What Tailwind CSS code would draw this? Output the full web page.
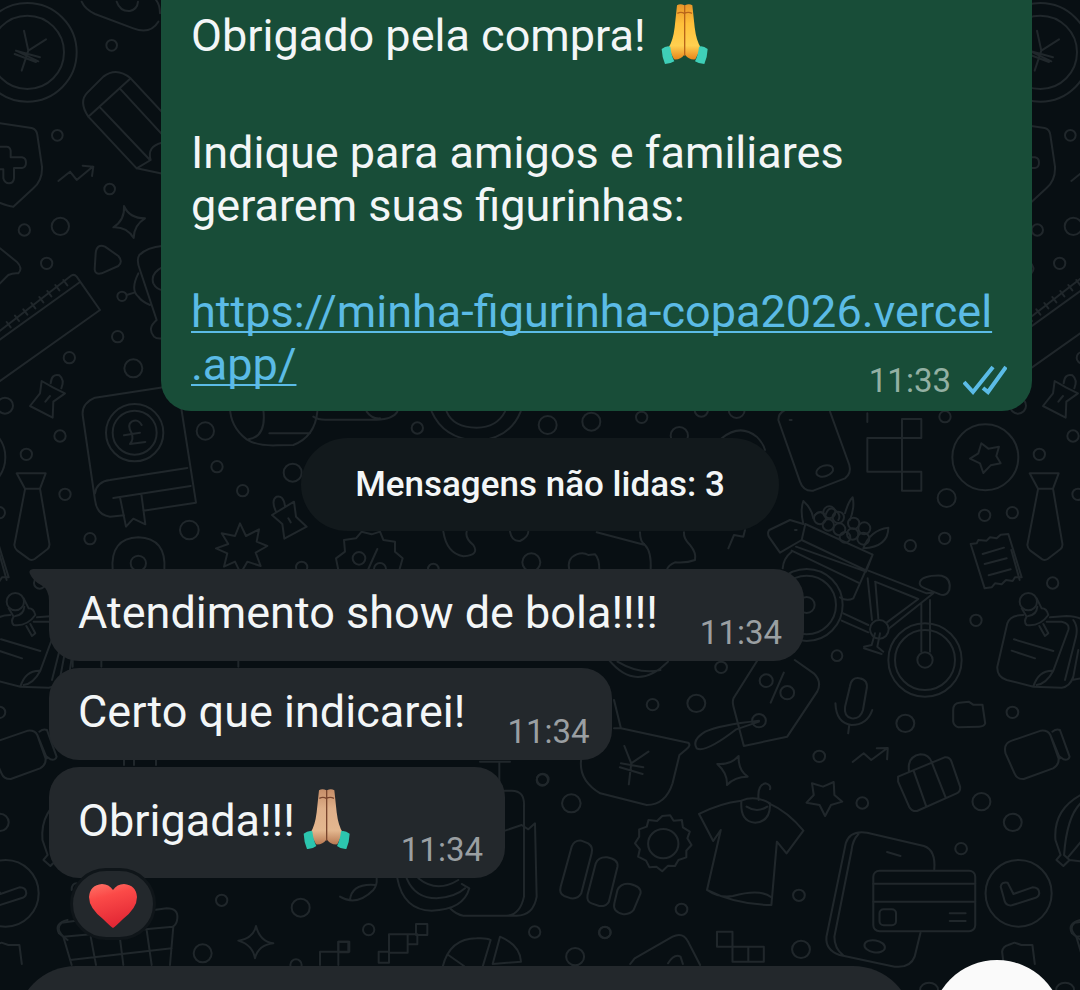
<!DOCTYPE html>
<html lang="pt-BR">

<head>
    <meta charset="UTF-8">
    <meta name="viewport" content="width=device-width, initial-scale=1.0">
    <title>Conversa</title>
    <script src="https://cdn.jsdelivr.net/npm/@tailwindcss/browser@4"></script>
</head>

<body class="bg-[#080f13] font-[Roboto,sans-serif] text-[#f3f6f7]">

    <div class="relative isolate flex min-h-screen flex-col overflow-hidden">

        <!-- doodle wallpaper, repeats every 1013px -->
        <svg class="absolute inset-0 -z-10 h-full w-full" viewBox="0 0 1080 990" preserveAspectRatio="xMinYMin slice"
            fill="none" stroke="#20272b" stroke-linecap="round" stroke-linejoin="round" aria-hidden="true">
            <g id="tile" transform="scale(.33333)" stroke-width="6">
                <!-- top left -->
                <path d="M245 5Q255 28 285 42L400 85Q450 105 475 65M350 5Q360 35 390 33Q412 28 414 5M468 0Q480 15 480 40" />
                <circle cx="82" cy="157" r="148" />
                <circle cx="82" cy="157" r="110" />
                <path d="M72 92L85 152L138 118M85 152L65 212M48 152L115 184M44 162L108 186M48 152L120 172" />
                <circle cx="335" cy="136" r="16" />
                <path d="M265 350Q235 305 262 278L310 230Q350 200 392 235L265 350L410 505L520 528M392 235L620 480M362 268L520 440M300 322L450 480M410 505L452 480Q440 440 485 428" />
                <circle cx="172" cy="406" r="16" />
                <path d="M0 370L95 384Q110 388 112 405L126 500Q128 540 100 565L40 620Q20 618 -20 600" />
                <path d="M-5 440H20Q30 440 32 452V472H66Q78 474 78 488Q78 502 66 504H42V535Q40 550 27 550Q14 550 10 535V508H-5" />
                <path d="M175 543L210 515L230 540L278 500M248 497L280 500L276 528" />
                <circle cx="329" cy="567" r="16" />
                <circle cx="73" cy="690" r="17" />
                <circle cx="181" cy="679" r="26" />
                <circle cx="140" cy="790" r="17" />
                <path d="M372 618Q388 655 435 655Q402 675 401 714Q380 680 340 682Q375 660 372 618Z" />
                <path d="M287 760Q290 730 315 740L355 768Q370 785 355 798L305 820Q285 825 284 808Z" />
                <path d="M0 745L50 785Q70 805 55 820Q40 818 25 825L-10 860" />
                <path d="M-10 1000L215 826Q223 822 230 830L300 930L-10 1150M-10 1026L240 846M20 966l12 16M45 947l12 16M70 928l12 16M94 909l12 16M118 891l12 16M142 873l12 16M166 855l12 16M190 840l12 16" />
                <path d="M490 737Q440 742 418 765Q408 780 420 810L470 960Q440 985 462 1010Q470 1018 490 1015M415 820Q390 870 415 890Q425 905 450 915M380 885L405 877M490 800Q450 820 460 850Q470 870 490 870" />
                <circle cx="366" cy="889" r="14" />
                <circle cx="353" cy="1010" r="17" />
                <circle cx="208" cy="1073" r="17" />
                <circle cx="400" cy="1105" r="27" />
                <circle cx="15" cy="1217" r="24" />
                <path d="M125 1143L120 1180L90 1218L158 1253L160 1205L195 1180L160 1163Z M152 1150Q155 1120 178 1126Q195 1140 184 1165M136 1205L150 1188" />

                <!-- under the first bubble -->
                <g transform="translate(0 1200)">
                    <path d="M330 350Q290 345 285 300L248 45Q245 10 285 -7L500 -40Q535 -40 540 0L588 308L430 332M285 280Q290 245 330 240L562 204M340 294L572 258M360 292L378 380L400 356L436 373L424 282M330 350L372 346" />
                    <circle cx="404" cy="98" r="86" />
                    <circle cx="404" cy="98" r="66" />
                    <path d="M425 75Q415 55 395 65Q380 75 395 100Q402 118 390 132L436 126M372 106L420 98" />
                    <circle cx="180" cy="108" r="17" />
                    <circle cx="79" cy="163" r="17" />
                    <circle cx="195" cy="283" r="17" />
                    <circle cx="270" cy="416" r="17" />
                    <circle cx="616" cy="93" r="26" />
                    <circle cx="651" cy="200" r="17" />
                    <circle cx="728" cy="272" r="17" />
                    <circle cx="878" cy="218" r="27" />
                    <circle cx="568" cy="390" r="28" />
                    <circle cx="905" cy="502" r="17" />
                    <path d="M50 220H137L120 266H75ZM75 268L43 435Q44 445 52 452L88 478Q96 482 104 477L142 448Q150 440 148 430L120 266" />
                    <path d="M338 510Q330 415 415 412Q500 415 493 510" />
                    <circle cx="415" cy="490" r="23" />
                    <path d="M720 370L738 408L777 388L770 425L802 438L767 458L782 498L742 485L722 520L705 485L672 500L682 460L648 445L685 432L665 400L705 408Z" />
                    <path d="M882 305L816 345L847 372L853 416L920 380L888 350ZM828 335Q812 300 830 290Q850 285 855 318M865 355L872 367" />
                    <path d="M690 20Q690 80 740 118Q770 138 830 136L880 135Q945 110 952 35M790 30Q800 110 745 118M808 100H930" />
                    <path d="M-5 450L20 540" />
                </g>

                <!-- around the unread pill -->
                <g transform="translate(900 1185)">
                    <path d="M40 65Q55 75 80 74H230Q280 72 292 50M200 50Q215 72 240 70M395 50Q430 130 530 138Q630 130 662 50M440 50Q460 98 530 98Q590 98 615 50" />
                    <circle cx="352" cy="99" r="17" />
                    <circle cx="743" cy="90" r="27" />
                    <circle cx="874" cy="80" r="27" />
                    <circle cx="1025" cy="67" r="17" />
                    <circle cx="1138" cy="122" r="26" />
                    <circle cx="1204" cy="45" r="20" />
                    <circle cx="1310" cy="45" r="24" />
                    <path d="M1265 130Q1320 85 1370 125Q1390 145 1395 165" />
                    <path d="M115 525L108 490L135 470L132 435L168 430L185 410L215 418L240 410L250 435L285 440L285 470L308 490L298 525M205 522L232 462" />
                    <circle cx="177" cy="490" r="19" />
                    <circle cx="240" cy="522" r="18" />
                    <path d="M430 410Q440 475 490 484Q540 480 520 450Q495 430 500 410M630 410Q635 440 660 438Q685 425 685 410" />
                    <circle cx="400" cy="522" r="16" />
                    <circle cx="694" cy="502" r="27" />
                    <path d="M808 525Q800 490 830 478Q850 470 865 480L885 478Q898 490 898 525M890 412L1035 450Q1055 470 1052 525M1020 412Q1020 440 1035 450M1152 412Q1150 430 1170 450Q1190 475 1185 495Q1160 505 1125 502Q1105 510 1100 525M1285 460L1302 420L1330 425L1335 405" />
                </g>

                <!-- right: phone, boxes, bicycle -->
                <g transform="translate(2280 1200)">
                    <path d="M55 60Q55 40 75 30M55 60L120 245Q130 275 160 272L255 235Q275 220 268 195L210 35M95 60h-6" />
                    <ellipse cx="194" cy="213" rx="26" ry="16" transform="rotate(-18 194 213)" />
                    <path d="M322 114H484V57H426V272H484V215H322ZM322 66V40" />
                    <circle cx="676" cy="172" r="99" />
                    <path d="M664 130L685 146L717 140L709 168L722 190L692 196L670 219L660 190L630 176L655 160Z" />
                    <circle cx="555" cy="50" r="17" />
                    <circle cx="560" cy="294" r="27" />
                    <circle cx="674" cy="346" r="17" />
                    <circle cx="757" cy="338" r="17" />
                    <circle cx="451" cy="437" r="17" />
                    <circle cx="554" cy="415" r="17" />
                    <circle cx="878" cy="549" r="17" />
                    <circle cx="648" cy="661" r="17" />
                    <circle cx="231" cy="767" r="16" />
                    <path d="M632 432L650 430L655 420L680 422L690 412L710 415L722 404L745 402L785 532L765 532L758 543L738 540L725 553L705 550L695 562L674 565ZM668 462L732 443M674 492L740 475M686 526L752 508" />
                    <path d="M130 372L90 360L28 390Q20 400 28 412L60 458L125 420L136 372L338 464L318 515L108 440M338 464L280 595Q260 605 240 592M95 452L295 548M125 420L320 512M95 455Q70 475 68 505M110 390h-5" />
                    <path d="M130 372Q120 330 130 303Q155 325 160 355M255 340Q265 305 278 292Q285 320 270 360M310 445Q330 390 385 383Q385 440 310 445M165 345Q185 325 195 350Q205 315 225 330Q245 345 235 360" />
                    <circle cx="180" cy="355" r="18" />
                    <circle cx="208" cy="337" r="18" />
                    <circle cx="235" cy="352" r="17" />
                    <circle cx="205" cy="375" r="17" />
                    <circle cx="238" cy="388" r="18" />
                    <circle cx="281" cy="370" r="17" />
                    <circle cx="278" cy="402" r="17" />
                    <circle cx="313" cy="385" r="18" />
                    <circle cx="310" cy="416" r="18" />
                    <circle cx="255" cy="412" r="16" />
                    <circle cx="140" cy="615" r="108" />
                    <circle cx="140" cy="615" r="88" />
                    <circle cx="140" cy="615" r="24" />
                    <circle cx="495" cy="780" r="110" />
                    <circle cx="495" cy="780" r="90" />
                    <circle cx="495" cy="780" r="23" />
                    <path d="M325 512L500 580L515 578M345 545L475 597L380 668M323 535L336 660M346 545L355 656M250 640L325 675M245 662L325 697M484 610V755M510 600V755M520 580L388 685M480 545Q490 525 545 527Q575 535 568 570Q560 590 540 583L495 565Q475 558 480 545Z" />
                    <circle cx="358" cy="688" r="28" />
                    <path d="M345 700L335 735L312 740M360 700L352 740L370 755M312 745L365 762" />
                    <path d="M790 645Q750 645 742 670L712 800Q710 830 740 840L820 860L905 863Q930 860 940 830L955 750M820 860Q835 810 880 812L925 690Q930 670 905 665L860 665M880 812Q860 850 830 855M870 652L920 648Q990 650 985 700L965 835L935 840M940 660Q955 680 948 710L915 840M762 718L880 753M755 752L825 775" />
                    <circle cx="805" cy="605" r="26" />
                    <path d="M785 625L800 650Q790 665 800 675Q840 680 865 645Q860 625 845 625L830 595M805 648Q830 645 832 620M838 678L855 708L865 700L850 672" />
                </g>

                <!-- bottom right -->
                <g transform="translate(1620 1980) scale(1.033 1)">
                    <circle cx="526" cy="22" r="17" />
                    <circle cx="327" cy="134" r="17" />
                    <circle cx="454" cy="130" r="26" />
                    <path d="M200 0Q280 100 372 5M225 5Q290 45 350 30" />
                    <path d="M632 0L562 115Q558 125 562 140L592 258L718 230L805 95Q820 65 795 40L740 0M708 38L670 128" />
                    <circle cx="657" cy="62" r="19" />
                    <circle cx="718" cy="98" r="20" />
                    <circle cx="636" cy="182" r="20" />
                    <path d="M636 185L570 208Q480 280 455 265Q440 240 480 215Q520 195 636 182" />
                    <path d="M900 80Q905 50 928 55Q955 60 948 90L938 150Q930 178 905 175Q882 170 886 140ZM858 130Q860 190 905 195Q950 195 965 150M898 196L895 220" />
                    <circle cx="1061" cy="190" r="26" />
                    <circle cx="1372" cy="157" r="17" />
                    <path d="M1200 150Q1200 130 1218 128L1245 125L1258 134L1285 134L1293 190Q1290 200 1275 200L1215 202Q1202 198 1200 185Z" />
                    <path d="M1352 280Q1345 250 1370 242L1455 212Q1475 210 1482 225L1506 295Q1508 315 1490 325L1405 357Q1385 358 1378 340ZM1488 215Q1500 205 1510 210L1538 290Q1535 302 1520 298L1510 290M1482 225L1510 295" />
                    <path d="M215 120L235 205L430 248Q440 255 425 268L405 285L385 370Q365 435 310 435L175 400Q110 360 120 295M215 205H235M245 258L265 310L315 275M265 310L258 373M235 310L300 322M232 322L298 342" />
                    <path d="M515 312Q555 315 577 288Q575 330 603 350Q565 350 543 375Q545 340 515 312Z" />
                    <circle cx="811" cy="289" r="17" />
                    <path d="M908 306L940 280L962 300L1008 265M978 265L1010 264L1008 298" />
                    <path d="M790 370L822 380L853 366L855 405L878 425L845 435L828 468L812 435L774 428L795 405Z" />
                    <circle cx="936" cy="429" r="17" />
                    <circle cx="1282" cy="425" r="26" />
                    <circle cx="1373" cy="487" r="26" />
                    <circle cx="1223" cy="566" r="17" />
                    <path d="M1040 350L1175 292Q1190 290 1195 305L1220 380Q1222 395 1210 400L1095 453Q1080 455 1072 440L1040 365ZM1072 335Q1065 290 1105 283Q1130 283 1138 308M1085 332L1122 440M1138 308L1178 412" />
                    <circle cx="91" cy="430" r="27" />
                    <circle cx="8" cy="358" r="17" />
                    <path d="M355 468L378 466L388 482L412 480L415 502L435 515L428 535L440 555L425 572L425 592L402 600L392 618L372 617L355 634L338 620L318 622L308 602L285 590L290 568L276 550L288 530L288 508L310 500L315 480L340 483Z" />
                    <circle cx="358" cy="551" r="44" />
                    <path d="M525 510L503 543L462 462Q520 430 585 422M665 430Q720 455 765 512L716 580L688 545L672 735Q570 735 485 690L525 510M585 422Q580 485 625 488Q670 485 668 430Q625 405 585 422M600 440Q630 460 660 440M635 420Q630 375 655 370Q672 375 668 388M485 690Q520 715 560 708Q640 685 672 712" />
                    <path d="M92 560Q100 540 120 542L140 550Q155 560 150 580L120 700Q110 718 90 715L70 708Q55 700 60 680ZM162 610Q170 590 195 592Q228 598 225 620L200 725Q192 740 172 738L150 730Q135 725 138 705ZM225 690Q235 668 262 672Q295 680 292 700L272 750Q260 765 240 762Q210 755 216 730Z" />
                    <circle cx="411" cy="748" r="17" />
                    <circle cx="188" cy="818" r="17" />
                    <circle cx="752" cy="706" r="17" />
                    <circle cx="758" cy="868" r="26" />
                    <circle cx="102" cy="890" r="26" />
                    <path d="M262 912L275 895L385 830Q415 815 430 845L465 915M372 910Q390 880 408 890L415 912M514 815H559V860H514ZM559 860H605V905H559ZM605 860H650V905H605Z" />
                    <path d="M1145 630Q1150 570 1115 558L950 518Q900 510 888 550L832 830Q828 870 870 885L1030 920Q1075 925 1088 890L1105 818M925 522Q908 540 905 570L855 830Q855 865 880 885M1008 576L1047 588" />
                    <ellipse cx="972" cy="859" rx="30" ry="18" transform="rotate(10 972 859)" />
                    <rect x="968" y="632" width="296" height="182" rx="18" />
                    <path d="M968 671H1264M968 725H1264M1190 760H1236M1190 783H1236" />
                    <rect x="986" y="748" width="48" height="48" rx="12" />
                    <ellipse cx="1390" cy="700" rx="96" ry="100" />
                    <path d="M1338 680Q1340 665 1358 668L1375 702L1430 682Q1450 682 1450 700Q1448 712 1435 715L1370 736Q1355 738 1350 725Z" />
                    <path d="M1570 405Q1490 450 1497 540L1512 585L1500 600L1520 618L1538 600L1522 585Q1530 470 1570 430M1535 590L1575 540M1538 600L1575 605" />
                    <path d="M1345 900L1342 875Q1345 858 1360 855L1378 848L1398 855L1430 855L1437 912M1570 780Q1530 790 1545 820L1570 840" />
                    <ellipse cx="1130" cy="990" rx="26" ry="22" />
                    <ellipse cx="1525" cy="990" rx="26" ry="22" />
                </g>

                <!-- bottom centre -->
                <g transform="translate(1020 2280)">
                    <path d="M420 5H510M478 5V70M490 92H515Q555 92 552 140V410Q540 465 500 467H370Q350 465 330 445M495 212L545 195L565 208L585 190L590 410Q580 467 530 467H500" />
                    <circle cx="607" cy="60" r="17" />
                    <path d="M172 355Q190 450 275 452Q370 450 388 385L365 372M200 355Q225 415 290 415Q345 412 375 385M235 355Q290 400 355 360M0 410Q50 440 100 390Q112 375 110 355M30 420Q35 370 105 375" />
                    <circle cx="86" cy="509" r="17" />
                    <circle cx="584" cy="516" r="17" />
                    <circle cx="795" cy="517" r="17" />
                    <path d="M147 523H203V578H147ZM116 575H147V608H116ZM203 523H232V553H203ZM228 492H262V525H228ZM-5 545H25V577H-5Z" />
                    <path d="M308 620Q330 535 410 535Q440 533 452 540L428 620M325 585L372 618M480 530Q540 555 543 605L458 612Z" />
                </g>

                <!-- bottom left -->
                <g transform="translate(0 1680)">
                    <circle cx="665" cy="1021" r="17" />
                    <circle cx="902" cy="1043" r="27" />
                    <circle cx="608" cy="1180" r="27" />
                    <circle cx="888" cy="1215" r="17" />
                    <path d="M768 1098Q780 1145 820 1150Q775 1155 765 1195Q758 1155 715 1142Q760 1135 768 1098Z" />
                    <path d="M190 1130Q165 1105 185 1088L500 1045Q535 1045 532 1075Q530 1095 518 1100L190 1130L215 1215M272 1130L288 1215M358 1120L370 1215M440 1110L455 1215M520 1100L510 1215M210 1200L515 1165M215 990Q215 970 230 970" />
                    <path d="M372 595V615M402 595V615M468 595V615M218 300V320M304 300V320M715 300V320M960 1215V1175H1015V1145H1048V1175H1015V1215" />
                </g>
            </g>
            <use href="#tile" x="1013" />
            <use href="#tile" x="-1013" />
        </svg>

        <main class="flex flex-col">

            <!-- sent message -->
            <article class="relative mr-12 ml-[161px] rounded-b-[30px] bg-[#184d38] px-[30px] pb-5 text-[45px] leading-[53px]">
                <p class="flex h-[73px] gap-4 pt-[9px]">Obrigado pela compra!
                    <svg class="-mt-1.5 h-[62px] w-12" viewBox="64 8 144 184" role="img" aria-label="mãos juntas">
                        <defs>
                            <linearGradient id="gold" x1="0" y1="0" x2="0" y2="1">
                                <stop offset="0" stop-color="#e8962a" />
                                <stop offset=".35" stop-color="#ffc03a" />
                                <stop offset=".75" stop-color="#ffd050" />
                                <stop offset="1" stop-color="#e8851c" />
                            </linearGradient>
                        </defs>
                        <path fill="url(#gold)" d="M112 14Q122 8 134 14V162Q122 178 103 176L86 142Q100 122 105 80Z" />
                        <path fill="url(#gold)" d="M158 14Q148 8 136 14V162Q148 178 167 176L184 142Q170 122 165 80Z" />
                        <path fill="none" stroke="#b8651a" stroke-width="4" d="M135 14V165M113 38Q124 32 134 38Q146 32 157 38" />
                        <path fill="#3fcfb8" d="M66 145Q80 134 92 138Q95 165 104 182Q92 190 76 190Q67 170 66 145Z" />
                        <path fill="#3fcfb8" d="M204 145Q190 134 178 138Q175 165 166 182Q178 190 194 190Q203 170 204 145Z" />
                    </svg>
                </p>
                <p class="mt-[53px]">Indique para amigos e familiares<br>gerarem suas figurinhas:</p>
                <p class="mt-[53px]">
                    <a class="text-[#5bbbe6] underline decoration-2 underline-offset-4 [text-decoration-skip-ink:none]"
                        href="https://minha-figurinha-copa2026.vercel.app/">https://minha-figurinha-copa2026.vercel<br>.app/</a>
                </p>
                <div class="absolute right-[25px] bottom-2.5 flex items-center gap-3 text-[33px] leading-10 text-[#93b0a3]">
                    <time>11:33</time>
                    <svg class="h-8 w-11" viewBox="0 0 44 32" fill="none" stroke="#5bbbe6" stroke-width="4" role="img"
                        aria-label="lida">
                        <path d="M1 17L10 27L30 2M20 23L25 27L43 2" />
                    </svg>
                </div>
            </article>

            <p class="mt-[27px] self-center rounded-full bg-[#12191c] px-[54px] py-[26px] text-[35px] leading-[41px] font-medium">
                Mensagens não lidas: 3</p>

            <!-- received messages -->
            <section class="mt-[38px] ml-[49px] flex flex-col items-start gap-[7px] text-[45px] leading-[53px]">
                <article class="relative flex items-end gap-[42px] rounded-[30px] rounded-tl-none bg-[#23282c] pt-[17px] pr-[22px] pb-2 pl-[29px]">
                    <svg class="absolute top-0 -left-5 h-8 w-5" viewBox="0 0 20 32" fill="#23282c" aria-hidden="true">
                        <path d="M20 0H4Q-1 1 1 5Q4 12 12 16Q20 20 20 32Z" />
                    </svg>
                    <p class="pb-[14px]">Atendimento show de bola!!!!</p>
                    <time class="text-[33px] leading-10 text-[#9a9fa2]">11:34</time>
                </article>
                <article class="flex items-end gap-[42px] rounded-[30px] bg-[#23282c] pt-[17px] pr-[22px] pb-2 pl-[29px]">
                    <p class="pb-[14px]">Certo que indicarei!</p>
                    <time class="text-[33px] leading-10 text-[#9a9fa2]">11:34</time>
                </article>
                <article class="relative flex items-end gap-[50px] rounded-[30px] bg-[#23282c] pt-[27px] pr-[22px] pb-2 pl-[29px]">
                    <p class="flex h-[76px] items-start gap-2">Obrigada!!!
                        <svg class="-mt-1.5 h-[62px] w-12" viewBox="64 52 144 184" role="img" aria-label="mãos juntas">
                            <defs>
                                <linearGradient id="skin" x1="0" y1="0" x2="0" y2="1">
                                    <stop offset="0" stop-color="#c58d68" />
                                    <stop offset=".35" stop-color="#dfb08a" />
                                    <stop offset=".75" stop-color="#e3b78f" />
                                    <stop offset="1" stop-color="#b87952" />
                                </linearGradient>
                            </defs>
                            <path fill="url(#skin)" d="M112 58Q122 52 134 58V206Q122 222 103 220L86 186Q100 166 105 124Z" />
                            <path fill="url(#skin)" d="M158 58Q148 52 136 58V206Q148 222 167 220L184 186Q170 166 165 124Z" />
                            <path fill="none" stroke="#79452e" stroke-width="4" d="M135 58V209M113 82Q124 76 134 82Q146 76 157 82" />
                            <path fill="#2cc5ae" d="M66 188Q80 177 92 181Q95 208 104 225Q92 235 76 234Q67 214 66 188Z" />
                            <path fill="#2cc5ae" d="M204 188Q190 177 178 181Q175 208 166 225Q178 235 194 234Q203 214 204 188Z" />
                        </svg>
                    </p>
                    <time class="text-[33px] leading-10 text-[#9a9fa2]">11:34</time>

                    <button type="button" aria-label="Reação: coração"
                        class="absolute -bottom-[62px] left-[21px] flex h-[72px] w-[86px] items-center justify-center rounded-full border-3 border-[#0f1519] bg-[#23282c] pt-1">
                        <svg class="h-11 w-12" viewBox="0 0 48 44" aria-hidden="true">
                            <defs>
                                <linearGradient id="heart" x1="0" y1="0" x2=".3" y2="1">
                                    <stop offset="0" stop-color="#ff7468" />
                                    <stop offset=".35" stop-color="#fb4a48" />
                                    <stop offset="1" stop-color="#e32835" />
                                </linearGradient>
                            </defs>
                            <path fill="url(#heart)" d="M24 44Q21 42 14 35Q0 24 0 13Q1 1 13 0Q20 0 24 6Q28 0 35 0Q47 1 48 13Q48 24 34 35Q27 42 24 44Z" />
                        </svg>
                    </button>
                </article>
            </section>
        </main>

        <!-- top edge of the composer -->
        <footer class="relative mt-auto h-6">
            <div class="absolute top-0 right-[167px] left-4 h-[120px] rounded-full bg-[#23282c]"></div>
            <button type="button" aria-label="Mensagem de voz"
                class="absolute -top-1.5 right-[17px] h-[132px] w-[132px] rounded-full bg-[#fafafa]"></button>
        </footer>
    </div>

</body>

</html>
